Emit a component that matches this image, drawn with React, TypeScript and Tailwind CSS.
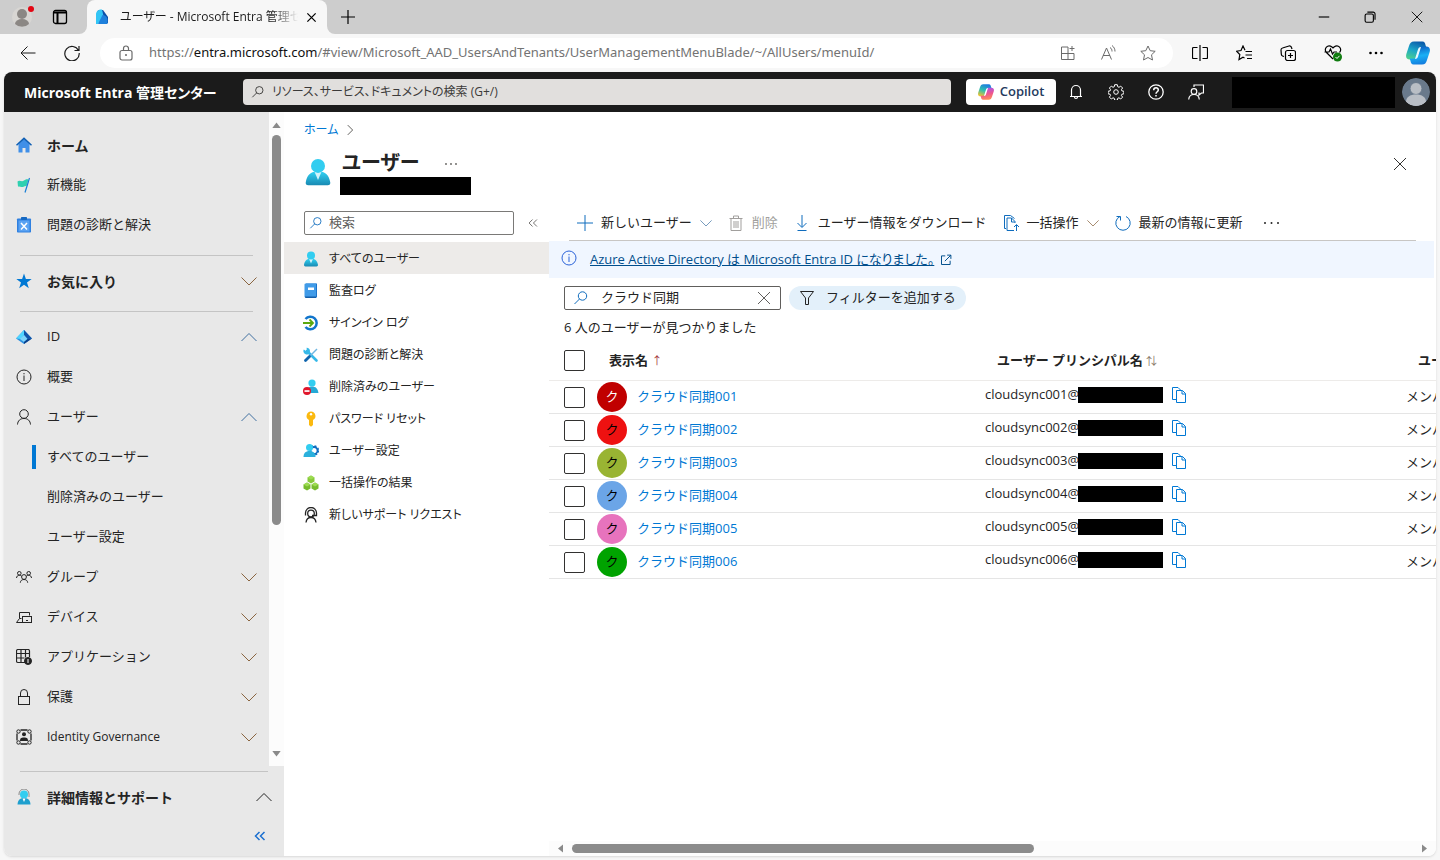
import type { ReactNode } from "react";

interface NavItem {
  label: string;
  icon?: ReactNode;
  chevron?: "up" | "down";
  active?: boolean;
}

interface IconProps {
  children: ReactNode;
  className?: string;
  box?: number;
}

// Thin outline icon, inherits the text colour
function Line({ children, className = "size-4", box = 16 }: IconProps) {
  return (
    <svg viewBox={`0 0 ${box} ${box}`} className={`shrink-0 ${className}`} fill="none" stroke="currentColor" strokeWidth={1} aria-hidden="true">
      {children}
    </svg>
  );
}

function Art({ children, className = "size-4", box = 16 }: IconProps) {
  return (
    <svg viewBox={`0 0 ${box} ${box}`} className={`shrink-0 ${className}`} aria-hidden="true">
      {children}
    </svg>
  );
}

function Chevron({ dir, className = "size-4" }: { dir: "up" | "down"; className?: string }) {
  return (
    <Line className={className}>
      <path d={dir === "up" ? "M.5 12 8 4.500 15.500 12" : "M.5 4.500 8 12 15.500 4.500"} />
    </Line>
  );
}

function SearchIcon({ className }: { className?: string }) {
  return (
    <Line className={className}>
      <circle cx="9.500" cy="6" r="4.200" />
      <path d="M6.500 9 1.500 14" />
    </Line>
  );
}

function CloseIcon({ className = "size-4" }: { className?: string }) {
  return <Line className={className}><path d="m2 2 12 12M14 2 2 14" /></Line>;
}

function DoubleLeft({ className }: { className: string }) {
  return <Line className={className}><path d="M7.500 4 3.500 8l4 4M12.500 4l-4 4 4 4" /></Line>;
}

function UserArt({ className = "size-4" }: { className?: string }) {
  return (
    <Art className={className}>
      <defs>
        <linearGradient id="user" x1="0" x2="0" y1="0" y2="1">
          <stop offset="0" stopColor="#32d4f5" />
          <stop offset="1" stopColor="#198ab3" />
        </linearGradient>
      </defs>
      <path d="M13.500 15.500a1.500 1.500 0 0 0 1.500-1.700C14.400 10 12.300 7.500 8 7.500s-6.400 2.500-7 6.300a1.500 1.500 0 0 0 1.500 1.700z" fill="url(#user)" />
      <path d="M6 7.800 8 12.500l2-4.700z" fill="#d5f3fb" />
      <circle cx="8" cy="4.500" r="4" fill="#32cdf0" />
    </Art>
  );
}

const homeIcon = (
  <Art>
    <path d="M2.500 7 8 2l5.500 5v8.500h-4V11h-3v4.500h-4z" fill="#3f8fe8" />
    <path d="M8 .3 16 7.800l-1 .9L8 2.500 1 8.700 0 7.800z" fill="#0f5fb4" />
  </Art>
);

const flagIcon = (
  <Art>
    <path d="M1.500 4.500c2-2 4 .5 6-.7 1.500-1 3-1.800 5-1.300l-2 6.500c-2-.5-3 1.500-5 1-1.500-.4-2.500-.8-3.500-.3z" fill="#2fd0b0" />
    <path d="m13.500 1-4.500 14.500" stroke="#1a7fd6" strokeWidth="1.200" />
  </Art>
);

const clipboardIcon = (
  <Art>
    <rect x="1" y="1.500" width="14" height="14" rx=".8" fill="#2f80e0" />
    <rect x="2.500" y="3.500" width="11" height="11" fill="#5aa2f2" />
    <rect x="5" y="0" width="6" height="3" rx=".7" fill="#1669c2" />
    <path d="m5 6 6 6.500M11 6l-6 6.500" stroke="#fff" strokeWidth="1.500" />
  </Art>
);

const starIcon = (
  <Art><path d="m8 .5 1.900 5.600h5.800L11 9.500l1.800 5.800L8 11.800l-4.800 3.500L5 9.500.3 6.100h5.800z" fill="#0078d4" /></Art>
);

const idIcon = (
  <Art>
    <path d="M8 1 0 9.500l8 5.500 8-5.500z" fill="#2b8fe0" />
    <path d="M8 1 0 9.500l5 .5L8 6z" fill="#50d5ff" />
    <path d="M8 1v5l3.500 4 4.500-.5z" fill="#1253a8" />
    <path d="m8 6-4 4 4 3 3.500-3z" fill="#7fd4fa" />
    <path d="m8 15 8-5.500-4.500.5L8 13z" fill="#0b3f8a" />
  </Art>
);

const infoIcon = (
  <Line>
    <circle cx="8" cy="8" r="7" />
    <path d="M8 6.500V12M8 4v1.300" />
  </Line>
);

const personIcon = (
  <Line>
    <circle cx="8" cy="5" r="4.300" />
    <path d="M1.500 15.500c.3-3.700 2.500-6 6.500-6s6.200 2.300 6.500 6" />
  </Line>
);

const groupIcon = (
  <Line>
    <circle cx="3.300" cy="4.300" r="1.800" />
    <circle cx="12.700" cy="4.300" r="1.800" />
    <circle cx="8" cy="8" r="2.400" />
    <path d="M.5 9c.2-1.700 1.200-2.800 2.800-2.800 1 0 1.800.4 2.300 1M15.500 9c-.2-1.700-1.200-2.800-2.800-2.800-1 0-1.800.4-2.300 1M4.300 13.700c.2-2 1.500-3.200 3.700-3.200s3.500 1.200 3.700 3.200" />
  </Line>
);

const deviceIcon = (
  <Line>
    <path d="M5.500 9.500h-2v-6h10v3M3.500 9.500l-3 4h6" />
    <rect x="6.500" y="7.500" width="9" height="6" />
    <path d="M10 11.500h2" />
  </Line>
);

const appsIcon = (
  <Line>
    <path d="M9 13.500H2a1.500 1.500 0 0 1-1.500-1.500V2A1.500 1.500 0 0 1 2 .5h10A1.500 1.500 0 0 1 13.500 2v6M.5 4.500h13M.5 9h8M5 .5v13M9.500.5v8" strokeWidth={1.200} />
    <circle cx="12" cy="12" r="3.500" fill="currentColor" />
    <path d="M12 10v4" stroke="#fff" />
  </Line>
);

const lockIcon = (
  <Line>
    <rect x="2.500" y="7.500" width="11" height="8" />
    <path d="M4.500 7.500V4a3.500 3.500 0 0 1 7 0v3.500" />
  </Line>
);

const governanceIcon = (
  <Line>
    <path d="M4.500 1h7M4.500 15h7M1 4.500v7M15 4.500v7" strokeWidth={1.300} />
    <circle cx="2.500" cy="2.500" r="1.700" />
    <circle cx="13.500" cy="2.500" r="1.700" />
    <circle cx="2.500" cy="13.500" r="1.700" />
    <circle cx="13.500" cy="13.500" r="1.700" />
    <circle cx="8" cy="5.300" r="2" fill="currentColor" stroke="none" />
    <path d="M4 12c0-2.500.8-3.500 4-3.500s4 1 4 3.500z" fill="currentColor" stroke="none" />
  </Line>
);

const logIcon = (
  <Art>
    <path d="M3 .5h11v14H3z" fill="#1c73c9" />
    <path d="M1.500 1.500a1 1 0 0 1 1-1H13v14H2.500a1 1 0 0 1-1-1z" fill="#409be8" />
    <path d="M5 4.500h6v2.500H5z" fill="#fff" />
    <path d="M2 13.500h11v1.500H3a1 1 0 0 1-1-1z" fill="#145ea8" />
  </Art>
);

const signInIcon = (
  <Art>
    <path d="M2.500 4a6.300 6.300 0 1 1 0 8" fill="none" stroke="#1275cc" strokeWidth="2.500" />
    <path d="M0 8h10M6.500 4.500 10 8l-3.500 3.500" fill="none" stroke="#5ca80e" strokeWidth="1.800" />
  </Art>
);

const toolsIcon = (
  <Art>
    <path d="m4 4 9.500 9.500" stroke="#35b8e8" strokeWidth="2.600" strokeLinecap="round" />
    <path d="m14 2-7.500 7.500" stroke="#6fb6e2" strokeWidth="1.500" />
    <path d="m6.500 9.500-4 4" stroke="#0e64ad" strokeWidth="2.800" strokeLinecap="round" />
    <path d="M.8 2.500 3 4l1-.8L3.500.8A3.300 3.300 0 1 1 .8 2.500" fill="#35b8e8" />
  </Art>
);

const deletedIcon = (
  <Art>
    <circle cx="9" cy="4" r="3.600" fill="#32cdf0" />
    <path d="M3 14c.4-4 2.300-6.500 6-6.500S14.700 9.500 15.500 14z" fill="#25a9d6" />
    <circle cx="4" cy="12" r="4" fill="#e0162b" />
    <path d="M1.500 11.200h5v1.700h-5z" fill="#fff" />
  </Art>
);

const keyIcon = (
  <Art>
    <path d="M8 .5a4.500 4.500 0 0 1 2 8.500v5L8 15.700 6 14V9A4.500 4.500 0 0 1 8 .5" fill="#fbb90f" />
    <circle cx="8" cy="3.300" r="1.200" fill="#fff" />
  </Art>
);

const userGearIcon = (
  <Art>
    <circle cx="11" cy="7.500" r="3.500" fill="none" stroke="#0f6cbf" strokeWidth="1.800" />
    <circle cx="11" cy="7.500" r="4.500" fill="none" stroke="#0f6cbf" strokeWidth="1.500" strokeDasharray="2 1.534" />
    <circle cx="6.500" cy="4.500" r="3.500" fill="#32cdf0" />
    <path d="M.5 14c0-3.700 2-6 6-6s6 2.300 6 6z" fill="#2bb0dc" />
  </Art>
);

const cubesIcon = (
  <Art>
    <path d="m8 .5 3.500 2v4L8 8.500 4.500 6.500v-4z" fill="#86c93a" />
    <path d="m4 7.500 3.500 2v4L4 15.500.5 13.500v-4z" fill="#76bc2d" />
    <path d="m12 7.500 3.500 2v4l-3.500 2-3.500-2v-4z" fill="#76bc2d" />
    <path d="m8 .5 3.500 2L8 4.500l-3.500-2zM4 7.500l3.500 2-3.500 2-3.500-2zM12 7.500l3.500 2-3.500 2-3.500-2z" fill="#9ddb52" />
  </Art>
);

const supportIcon = (
  <Line>
    <path d="M2.500 8.500V6a5.500 5.500 0 0 1 11 0v2.500H9M3 15.500c.3-3 2-5 5-5s4.700 2 5 5" strokeWidth={1.300} />
    <circle cx="8" cy="6.500" r="3.300" strokeWidth={1.300} />
  </Line>
);

const sideNav: NavItem[][] = [
  [
    { label: "ホーム", icon: homeIcon },
    { label: "新機能", icon: flagIcon },
    { label: "問題の診断と解決", icon: clipboardIcon },
  ],
  [{ label: "お気に入り", icon: starIcon, chevron: "down" }],
  [
    { label: "ID", icon: idIcon, chevron: "up" },
    { label: "概要", icon: infoIcon },
    { label: "ユーザー", icon: personIcon, chevron: "up" },
    { label: "すべてのユーザー", active: true },
    { label: "削除済みのユーザー" },
    { label: "ユーザー設定" },
    { label: "グループ", icon: groupIcon, chevron: "down" },
    { label: "デバイス", icon: deviceIcon, chevron: "down" },
    { label: "アプリケーション", icon: appsIcon, chevron: "down" },
    { label: "保護", icon: lockIcon, chevron: "down" },
    { label: "Identity Governance", icon: governanceIcon, chevron: "down" },
  ],
];

function labelStyle(label: string) {
  if (label === "ホーム" || label === "お気に入り") return "text-[14px] font-bold";
  return /^Identity/.test(label) ? "text-[12px]" : "";
}

const menu: NavItem[] = [
  { label: "すべてのユーザー", icon: <UserArt />, active: true },
  { label: "監査ログ", icon: logIcon },
  { label: "サインイン ログ", icon: signInIcon },
  { label: "問題の診断と解決", icon: toolsIcon },
  { label: "削除済みのユーザー", icon: deletedIcon },
  { label: "パスワード リセット", icon: keyIcon },
  { label: "ユーザー設定", icon: userGearIcon },
  { label: "一括操作の結果", icon: cubesIcon },
  { label: "新しいサポート リクエスト", icon: supportIcon },
];

const users = [
  { no: "001", color: "bg-[#c00000] text-white" },
  { no: "002", color: "bg-[#ee1111] text-black" },
  { no: "003", color: "bg-[#99b433] text-black" },
  { no: "004", color: "bg-[#6ba5e7] text-black" },
  { no: "005", color: "bg-[#e773bd] text-black" },
  { no: "006", color: "bg-[#00a300] text-black" },
];

function TabStrip() {
  return (
    <div className="flex h-[34px] shrink-0">
      <div className="flex w-[87px] items-center gap-5 rounded-br-lg bg-[#cdcdcd] pl-3">
        <button aria-label="プロファイル" className="relative">
          <Art className="size-5" box={20}>
            <circle cx="10" cy="10" r="10" fill="#d8d6d3" />
            <circle cx="10" cy="7" r="5" fill="#8b8784" />
            <path d="M3 17a7 5 0 0 1 14 0 10 10 0 0 1-14 0" fill="#8b8784" />
          </Art>
          <span className="absolute -top-px -right-0.5 size-[6px] rounded-full bg-[#e30613]" />
        </button>
        <button aria-label="タブ操作メニュー">
          <Line>
            <rect x="1.500" y="1.500" width="13" height="13" rx="2" strokeWidth={1.300} />
            <path d="M1.500 3.500h13M5.500 4v10.500" strokeWidth={2} />
          </Line>
        </button>
      </div>
      <div className="flex w-60 bg-[#cdcdcd]">
        <div className="flex w-full items-center gap-2 rounded-t-lg bg-[#f7f7f7] pr-[10px] pl-[7px]">
          <Art>
            <path d="M3 4a3 3 0 0 1 3-3h3l5 7v6H6z" fill="#0c4fa8" />
            <path d="M2 5C2 3 4 .5 7 .5h1L9.500 7 4 15H2z" fill="#33c5f5" />
            <path d="M8.500 6c3 0 5 2.500 5 5v4H4z" fill="#1e80dc" />
          </Art>
          <span className="ml-0.5 flex-1 overflow-hidden mask-r-from-85% text-[12px] [font-feature-settings:'palt'] whitespace-nowrap text-[#1b1b1b]">
            ユーザー - Microsoft Entra 管理センター
          </span>
          <button aria-label="タブを閉じる" className="flex"><CloseIcon className="size-[11px] stroke-[1.800]" /></button>
        </div>
      </div>
      <div className="flex flex-1 items-center rounded-bl-lg bg-[#cdcdcd] pr-4 pl-[13px]">
        <button aria-label="新しいタブ"><Line><path d="M8 1v14M1 8h14" strokeWidth={1.200} /></Line></button>
        <div className="ml-auto flex items-center gap-[34px]">
          <button aria-label="最小化"><Line className="size-3"><path d="M1 8h14" strokeWidth={1.500} /></Line></button>
          <button aria-label="元に戻す">
            <Line className="size-3">
              <rect x="1.500" y="4" width="11" height="11" rx="2" strokeWidth={1.500} />
              <path d="M4.500 1.500H12A2.500 2.500 0 0 1 14.700 4v7.500" strokeWidth={1.500} />
            </Line>
          </button>
          <button aria-label="閉じる"><CloseIcon className="size-[14px]" /></button>
        </div>
      </div>
    </div>
  );
}

function AddressBar() {
  return (
    <div className="flex h-[38px] shrink-0 items-center bg-[#f7f7f7] pr-[10px] pl-5 text-[#1b1b1b]">
      <button aria-label="戻る"><Line className="size-4"><path d="M15.500 8H1M7.500 1.500 1 8l6.500 6.500" /></Line></button>
      <button aria-label="更新" className="ml-7">
        <Line className="size-4"><path d="M14.500 5.500A7.200 7.200 0 1 0 15.200 8M15 1v4.500h-4.500" strokeWidth={1.200} /></Line>
      </button>
      <div className="ml-5 flex h-[30px] flex-1 items-center rounded-full bg-white pr-[17px] pl-[18px] text-[#6b6b6b]">
        <Line>
          <rect x="2" y="5.500" width="12" height="9.500" rx="2" strokeWidth={1.200} />
          <path d="M5.500 5.500V3.500a2.500 2.500 0 0 1 5 0v2" strokeWidth={1.200} />
          <circle cx="8" cy="10" r=".6" fill="currentColor" />
        </Line>
        <div className="ml-[15px] flex-1 font-['Noto_Sans',sans-serif] text-[13px] whitespace-nowrap text-[#737373]">
          https://<span className="text-[#111]">entra.microsoft.com</span>/#view/Microsoft_AAD_UsersAndTenants/UserManagementMenuBlade/~/AllUsers/menuId/
        </div>
        <div className="flex items-center gap-6">
          <button aria-label="アプリ">
            <Line><path d="M8 2H1.500v12.500H14V8.500M1.500 8.500H14M8 2v12.500M12 1v5M9.500 3.500h5" /></Line>
          </button>
          <button aria-label="音声で読み上げる">
            <Line><path d="M1.500 14.500 6.500 3l5 11.500M3 10.500h7M10 2.500c1.500 1 2 2 2 4M12 .5c2 1.500 3 3.500 3 6" /></Line>
          </button>
          <button aria-label="お気に入りに追加">
            <Line><path d="m8 1 2.200 4.700 5 .6-3.700 3.500 1 5.200L8 12.500 3.500 15l1-5.200L.8 6.300l5-.6z" /></Line>
          </button>
        </div>
      </div>
      <div className="ml-[19px] flex items-center gap-7 text-black">
        <button aria-label="画面を分割する"><Line><path d="M5.500 2.500h-4a1 1 0 0 0-1 1v9a1 1 0 0 0 1 1h4M8 0v16M10.500 2.500h4a1 1 0 0 1 1 1v9a1 1 0 0 1-1 1h-4" strokeWidth={1.200} /></Line></button>
        <button aria-label="お気に入り"><Line><path d="M9 5.300 7 1 5 5.500l-4.500.7L3.800 9.500 3 14.500l4-2.300 1.500.8M9.500 6.500H16M9.500 10H16M11 13.500h5" strokeWidth={1.200} /></Line></button>
        <button aria-label="コレクション"><Line><rect x="5.500" y="5.500" width="10" height="10" rx="2" strokeWidth={1.200} /><path d="M10.500 8v5M8 10.500h5M4 11.500 2.500 11A2 2 0 0 1 1.300 9L1 5a2 2 0 0 1 1.500-2L9 1a2 2 0 0 1 2.500 1.500L12 4" strokeWidth={1.200} /></Line></button>
        <button aria-label="ブラウザーのエッセンシャル">
          <Line className="-mr-0.5 size-[18px]" box={18}>
            <path d="m9 15-6.500-6.500C-.5 5 3.500-.5 8 3l1 1 1-1c4.500-3.500 8.500 2 5.500 5.500M.5 8H5l1.500-3 2 5 1.500-2h3" strokeWidth={1.200} />
            <circle cx="13.500" cy="13" r="4.500" fill="#107c10" stroke="none" />
            <path d="m11.500 13 1.500 1.500 2.500-2.700" stroke="#fff" />
          </Line>
        </button>
        <button aria-label="設定など"><Line><g fill="currentColor" stroke="none"><circle cx="2.500" cy="8" r="1.300" /><circle cx="8" cy="8" r="1.300" /><circle cx="13.500" cy="8" r="1.300" /></g></Line></button>
        <button aria-label="Copilot" className="-ml-1.5"><CopilotLogo className="size-6" blue /></button>
      </div>
    </div>
  );
}

function CopilotLogo({ className, blue = false }: { className: string; blue?: boolean }) {
  const id = blue ? "edge" : "entra";
  return (
    <Art className={className} box={24}>
      <defs>
        <linearGradient id={`${id}-a`} x1=".6" x2=".2" y1="0" y2="1">
          <stop offset="0" stopColor={blue ? "#0a5cab" : "#1c7be0"} />
          <stop offset=".5" stopColor={blue ? "#1ba6c8" : "#2ec0b0"} />
          <stop offset="1" stopColor={blue ? "#4fd18b" : "#f5c22b"} />
        </linearGradient>
        {/* runs bottom to top, the shape that uses it is rotated by 180° */}
        <linearGradient id={`${id}-b`} x1=".5" x2=".3" y1="1" y2="0">
          <stop offset="0" stopColor={blue ? "#0d5fc2" : "#a855e8"} />
          <stop offset=".5" stopColor={blue ? "#18b0f5" : "#ee5590"} />
          <stop offset="1" stopColor={blue ? "#1478dc" : "#ff9152"} />
        </linearGradient>
      </defs>
      <path d="M8 .5h8.500c2 0 2.500 1.500 3 3.500l.8 2.500H16c-2.500 0-3 1-3.700 3.200L9.500 18.500H4C0 18.500-.5 15.500.5 12.500L3 5C4 2 5 .5 8 .5" fill={`url(#${id}-a)`} />
      <path d="M8 .5h8.500c2 0 2.500 1.500 3 3.500l.8 2.500H16c-2.500 0-3 1-3.700 3.200L9.500 18.500H4C0 18.500-.5 15.500.5 12.500L3 5C4 2 5 .5 8 .5" fill={`url(#${id}-b)`} transform="rotate(180 12 12)" />
      <path d="m9 18 2.800-9c.6-2 1.200-2.800 3.200-3l-3 9.500C11.500 17 11 18 9 18" fill={blue ? "#e8f8ff" : "#fff"} />
    </Art>
  );
}

function PortalHeader() {
  return (
    <header className="flex h-10 shrink-0 items-center bg-[#1b1b1b] pr-[6px] pl-5 text-white">
      <h1 className="w-[219px] text-[14px] font-bold whitespace-nowrap [font-feature-settings:'palt']">Microsoft Entra 管理センター</h1>
      <label className="flex h-[26px] max-w-[708px] flex-1 items-center gap-[7px] rounded-sm bg-[#e1dfdd] pl-2 text-[#323130]">
        <SearchIcon className="size-[14px]" />
        <input
          className="flex-1 bg-transparent text-[12px] [font-feature-settings:'palt'] outline-none placeholder:text-[#3b3a39]"
          placeholder="リソース、サービス、ドキュメントの検索 (G+/)"
          aria-label="検索"
        />
      </label>
      <button className="ml-[15px] flex h-[26px] w-[90px] items-center justify-center gap-1.5 rounded-sm bg-white text-[13px] font-semibold text-[#243a5e]">
        <CopilotLogo className="size-4" />
        Copilot
      </button>
      <div className="ml-3 flex items-center gap-6">
        <button aria-label="通知"><Line><path d="M2 12.500h12M3.500 12.500V6a4.500 4.500 0 0 1 9 0v6.500M6.500 13a1.500 1.500 0 0 0 3 0" strokeWidth={1.200} /></Line></button>
        <button aria-label="設定">
          <Line>
            <circle cx="8" cy="8" r="2.300" />
            <path d="m6.700.7 2.600 0 .4 2 1.300.6 1.700-1.200 1.900 1.900L13.400 5.700l.5 1.200 2 .4v2.500l-2 .4-.5 1.200 1.200 1.700-1.900 1.900-1.700-1.200-1.300.5-.4 2H6.700l-.4-2L5 13.800 3.300 15l-1.900-1.900 1.200-1.700-.5-1.200-2-.4V7.300l2-.4.5-1.200L1.400 4l1.900-1.900L5 3.300l1.300-.6z" />
          </Line>
        </button>
        <button aria-label="ヘルプ">
          <Line>
            <circle cx="8" cy="8" r="7.200" strokeWidth={1.300} />
            <path d="M5.700 6.200C5.700 3 10.500 3 10.300 6c0 1.700-2.300 1.800-2.300 3.800M8 11v1.500" strokeWidth={1.500} />
          </Line>
        </button>
        <button aria-label="フィードバック">
          <Line>
            <circle cx="6" cy="7.500" r="2.800" strokeWidth={1.200} />
            <path d="M.7 15.500c.3-3.500 2-5 5.300-5s5 1.500 5.300 5M6 3V1h9.500v8h-2l-2.500 2V8.500" strokeWidth={1.200} />
          </Line>
        </button>
      </div>
      <div className="ml-auto h-[31px] w-[163px] bg-black" />
      <button aria-label="アカウント" className="ml-[7px]">
        <Art className="size-7 rounded-full" box={28}>
          <circle cx="14" cy="14" r="14" fill="#69798b" />
          <circle cx="14" cy="10.500" r="6" fill="#b9bec5" stroke="#69798b" />
          <path d="M4 24c0-5 4-7.500 10-7.500S24 19 24 24a14 14 0 0 1-20 0" fill="#b9bec5" />
        </Art>
      </button>
    </header>
  );
}

function SideNav() {
  return (
    <nav className="flex w-[280px] shrink-0 flex-col bg-[#e8e8e8] text-[13px] text-[#242424]">
      <div className="flex min-h-0 flex-1">
        <div className="flex-1 overflow-hidden pt-[13px]">
          {sideNav.map((group, i) => (
            <ul key={i} className={i > 0 ? "before:mr-4 before:mb-[5px] before:ml-4 before:mt-[10px] before:block before:h-px before:bg-[#c4c4c4]" : ""}>
              {group.map((item) => (
                <li key={item.label}>
                  <a href="#" className="flex h-10 items-center pr-3 pl-3">
                    {item.icon}
                    {item.active && <span className="ml-4 h-6 w-1 bg-[#0078d4]" />}
                    <span className={`flex-1 ${item.icon ? "ml-[15px]" : item.active ? "ml-[11px]" : "ml-[31px]"} ${labelStyle(item.label)}`}>
                      {item.label}
                    </span>
                    {item.chevron && <Chevron dir={item.chevron} className={item.chevron === "up" ? "size-4 text-[#3f6f9f]" : "size-4 text-[#8a6540]"} />}
                  </a>
                </li>
              ))}
            </ul>
          ))}
        </div>
        <div className="flex w-[15px] flex-col items-center bg-[#fcfcfc] pt-[10px] pb-[9px]">
          <Art className="h-[6px] w-[9px]" box={10}><path d="M5 1 12 10H-2z" fill="#8a8a8a" /></Art>
          <div className="mt-[7px] h-[390px] w-[9px] rounded-full bg-[#8b8b8b]" />
          <Art className="mt-auto h-[6px] w-[9px]" box={10}><path d="M5 9 12 0H-2z" fill="#8a8a8a" /></Art>
        </div>
      </div>
      <div className="h-[90px] shrink-0 pt-[5px]">
        <div className="mr-4 ml-4 h-px bg-[#c4c4c4]" />
        <button className="mt-[5px] flex h-10 w-full items-center pr-3 pl-3 text-left text-[14px] font-bold">
          <Art>
            <path d="M3 6V5a5 5 0 0 1 10 0v3" fill="none" stroke="#8a8a8a" />
            <circle cx="8" cy="5.500" r="4" fill="#32cdf0" />
            <path d="M1.500 15.500c.3-4 2-6.500 6.500-6.500s6.200 2.500 6.500 6.500z" fill="#1e9fce" />
            <path d="m6.500 9.500 1.500 3.500 1.500-3.500z" fill="#fff" />
          </Art>
          <span className="ml-[15px] flex-1">詳細情報とサポート</span>
          <Chevron dir="up" />
        </button>
        <button aria-label="折りたたむ" className="mt-[11px] mr-4 ml-auto block text-[#1a6fd0]"><DoubleLeft className="size-4 stroke-[1.500]" /></button>
      </div>
    </nav>
  );
}

function ResourceMenu() {
  return (
    <div className="w-[265px] shrink-0 [font-feature-settings:'palt']">
      <div className="mb-[7px] flex h-6 items-center pl-5 text-[13px]">
        <label className="flex h-6 w-[210px] items-center gap-1.5 rounded-xs border border-[#7a7977] bg-white pl-1">
          <SearchIcon className="size-[14px] text-[#0f6cbd]" />
          <input className="w-full bg-transparent outline-none placeholder:text-[#605e5c]" placeholder="検索" aria-label="メニューの検索" />
        </label>
        <button aria-label="メニューを折りたたむ" className="ml-3 text-[#605e5c]"><DoubleLeft className="size-[14px]" /></button>
      </div>
      <ul className="text-[12px]">
        {menu.map((item) => (
          <li key={item.label}>
            <a href="#" className={`flex h-8 items-center gap-[10px] pt-0.5 pl-[19px] text-[#242424] ${item.active ? "bg-[#edebe9]" : ""}`}>
              {item.icon}
              {item.label}
            </a>
          </li>
        ))}
      </ul>
    </div>
  );
}

function CommandBar() {
  return (
    <div className="mx-5 flex h-[30px] items-center border-b border-[#c8c6c4] pb-[6px] pl-2 whitespace-nowrap text-[#242424]">
      <button className="flex items-center gap-2">
        <Line className="size-4 text-[#0f6cbd]"><path d="M8 0v16M0 8h16" /></Line>
        新しいユーザー
        <Chevron dir="down" className="size-3 text-[#4a7ba8]" />
      </button>
      <button className="ml-4 flex items-center gap-2 text-[#a19f9d]" disabled>
        <Line><path d="M1.500 3.500h13M5.500 3V1h5v2M3 3.500v12h10v-12M6 6v7M8 6v7M10 6v7" /></Line>
        削除
      </button>
      <button className="ml-4 flex items-center gap-2">
        <Line className="size-4 text-[#0f6cbd]"><path d="M8 0v12M3.500 8 8 12.500 12.500 8M3.500 15.500h9" /></Line>
        ユーザー情報をダウンロード
      </button>
      <button className="ml-4 flex items-center gap-2">
        <Line className="size-4 text-[#0f6cbd]"><path d="M3 13.500H1.500V.5h6l4 3M12 8V6.500L8.500 3H4v12.500h7M8.500 3v4H12M13.500 16v-6M11 12l2.500-2.500L16 12" /></Line>
        一括操作
        <Chevron dir="down" className="size-3 text-[#8a6540]" />
      </button>
      <button className="ml-4 flex items-center gap-2">
        <Line className="size-4 text-[#0f6cbd]"><path d="M5 1.500A7.200 7.200 0 1 0 11 1.500M1.500 1.500H5.500v4" /></Line>
        最新の情報に更新
      </button>
      <button aria-label="その他" className="ml-5">
        <Line><g fill="currentColor" stroke="none"><circle cx="2" cy="8" r="1" /><circle cx="8.500" cy="8" r="1" /><circle cx="15" cy="8" r="1" /></g></Line>
      </button>
    </div>
  );
}

function UserTable() {
  const box = "block size-[21px] appearance-none rounded-xs border border-[#323130] bg-white";
  return (
    <div className="overflow-hidden">
      <table className="w-[1400px] table-fixed text-left">
        <colgroup>
          <col className="w-12" />
          <col className="w-[388px]" />
          <col className="w-[421px]" />
          <col />
        </colgroup>
        <thead>
          <tr className="h-[43px] border-b border-[#edebe9] text-[13px] font-semibold">
            <th className="pt-1 pl-[15px]"><input type="checkbox" aria-label="すべて選択" className={box} /></th>
            <th className="pt-1 pl-3">表示名 <span className="text-[11px] font-normal text-[#a4373a]">↑</span></th>
            <th className="pt-1 pl-3">ユーザー プリンシパル名 <span className="text-[11px] font-normal text-[#8a7a6a]">⇅</span></th>
            <th className="pt-1 pl-3">ユーザーの種類</th>
          </tr>
        </thead>
        <tbody>
          {users.map((u) => (
            <tr key={u.no} className="h-[33px] border-b border-[#e5e5e5]">
              <td className="pt-0.5 pl-[15px]"><input type="checkbox" aria-label={`クラウド同期${u.no}`} className={box} /></td>
              <td>
                <div className="flex items-center gap-[10px]">
                  <span className={`flex size-[30px] items-center justify-center rounded-full text-[13px] ${u.color}`}>ク</span>
                  <a href="#" className="text-[#0078d4]">クラウド同期{u.no}</a>
                </div>
              </td>
              <td>
                <div className="flex items-center pb-1">
                  <span className="w-[93px]">cloudsync{u.no}@</span>
                  <span className="h-4 w-[85px] bg-black" />
                  <button aria-label="コピー" className="ml-2 text-[#0078d4]">
                    <Line><path d="M5 12.500H1.500V.5h5.500l3 3M5.500 3.500v12h9v-9l-3-3zM11 3.500V7h3.500" /></Line>
                  </button>
                </div>
              </td>
              <td>メンバー</td>
            </tr>
          ))}
        </tbody>
      </table>
    </div>
  );
}

function UsersBlade() {
  return (
    <section className="flex min-w-0 flex-1 flex-col text-[13px] text-[#242424]">
      <CommandBar />
      <div className="mr-0.5 flex h-[37px] shrink-0 items-center gap-[13px] bg-[#f0f6ff] pl-3">
        <span className="pb-1 text-[#2b63d9]">{infoIcon}</span>
        <a href="#" className="flex items-center gap-[6px] text-[#004e8c] [font-feature-settings:'palt']">
          <span className="underline">Azure Active Directory は Microsoft Entra ID になりました。</span>
          <Line className="size-3"><path d="M7 2.500H2v11.500h11.500V9M9.500 1.500h5v5M14.500 1.500 6.500 9.500" strokeWidth={1.300} /></Line>
        </a>
      </div>
      <div className="mt-2 flex gap-2 pl-[15px]">
        <div className="flex h-6 w-[217px] items-center gap-3 rounded-xs border border-[#605e5c] pr-2 pl-2">
          <SearchIcon className="size-4 text-[#0f6cbd]" />
          <input className="min-w-0 flex-1 bg-transparent outline-none" defaultValue="クラウド同期" aria-label="ユーザーの検索" />
          <button aria-label="クリア" className="flex text-[#605e5c]"><CloseIcon /></button>
        </div>
        <button className="flex h-6 items-center gap-[11px] rounded-full bg-[#e3f0fa] px-[10px]">
          <Line><path d="M1.500 1.500h13L9.500 8v6.500h-3V8z" /></Line>
          フィルターを追加する
        </button>
      </div>
      <p className="mt-[7px] h-5 pl-[15px] leading-5">6 人のユーザーが見つかりました</p>
      <UserTable />
      <div className="mt-auto flex h-[15px] items-center bg-[#fcfcfc] px-[9px]">
        <Art className="h-[9px] w-[5px]" box={10}><path d="M0 5 10-3v16z" fill="#8a8a8a" /></Art>
        <div className="ml-[9px] h-[9px] w-[462px] rounded-full bg-[#8b8b8b]" />
        <Art className="ml-auto h-[9px] w-[5px]" box={10}><path d="M10 5 0-3v16z" fill="#8a8a8a" /></Art>
      </div>
    </section>
  );
}

export default function App() {
  return (
    <div className="flex h-screen flex-col overflow-hidden bg-[#f7f7f7] font-['Open_Sans','Noto_Sans_CJK_JP',sans-serif]">
      <TabStrip />
      <AddressBar />
      <div className="mx-1 mb-1 flex min-h-0 flex-1 flex-col overflow-hidden rounded-lg bg-white shadow-sm">
        <PortalHeader />
        <div className="flex min-h-0 flex-1">
          <SideNav />
          <main className="flex min-w-0 flex-1 flex-col">
            <div className="flex h-9 items-center gap-1.5 pl-5 text-[12px]">
              <a href="#" className="text-[#0078d4] [font-feature-settings:'palt']">ホーム</a>
              <Line className="size-3 text-[#605e5c]"><path d="m5 1.500 6.500 6.500L5 14.500" strokeWidth={1.300} /></Line>
            </div>
            <div className="flex h-[63px] shrink-0 pl-5">
              <UserArt className="mt-[10px] size-[28px]" />
              <div className="ml-2">
                <div className="flex h-[29px] items-center">
                  <h2 className="pl-0.5 text-[20px] leading-7 font-bold text-[#242424] [font-feature-settings:'palt']">ユーザー</h2>
                  <button aria-label="その他" className="ml-6 text-[#605e5c]">
                    <Line><g fill="currentColor" stroke="none"><circle cx="3" cy="9" r=".9" /><circle cx="8" cy="9" r=".9" /><circle cx="13" cy="9" r=".9" /></g></Line>
                  </button>
                </div>
                <div className="h-[18px] w-[131px] bg-black" />
              </div>
              <button aria-label="閉じる" className="mt-2 mr-7 ml-auto h-4 text-[#323130]"><CloseIcon /></button>
            </div>
            <div className="flex min-h-0 flex-1">
              <ResourceMenu />
              <UsersBlade />
            </div>
          </main>
        </div>
      </div>
    </div>
  );
}
